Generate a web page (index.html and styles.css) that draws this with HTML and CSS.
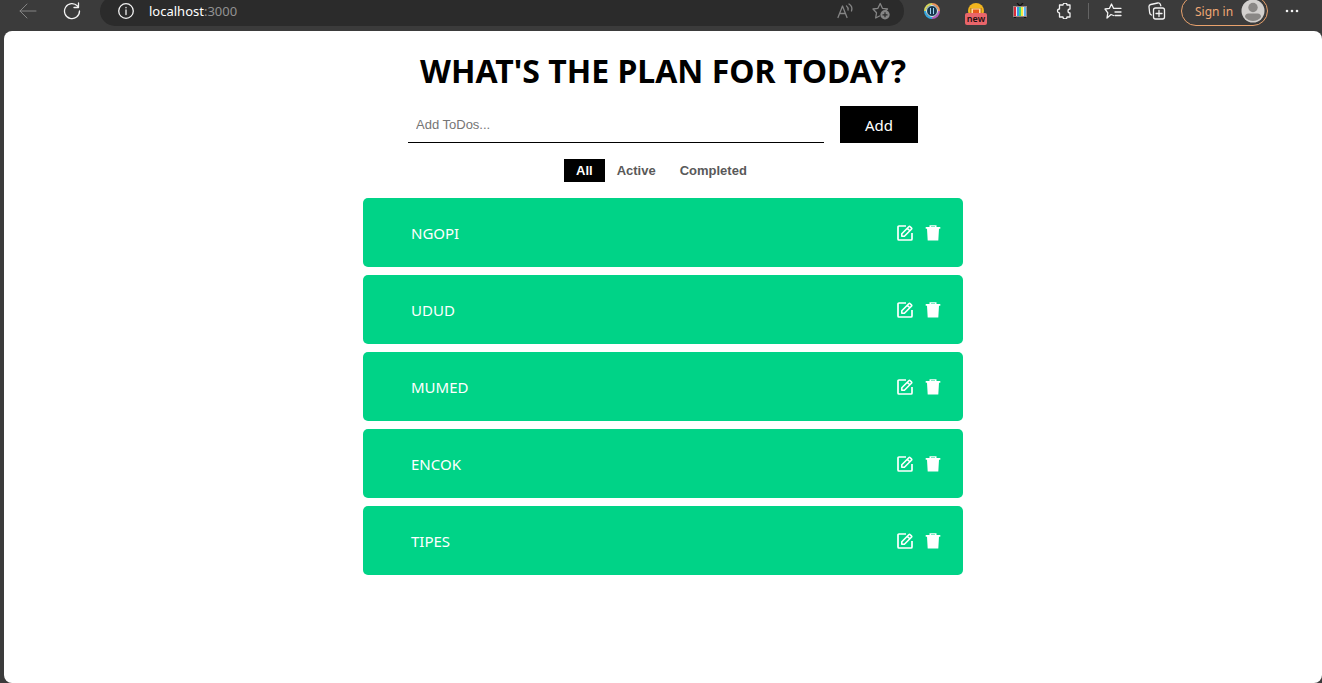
FILE: index.html
```html
<!DOCTYPE html>
<html lang="en">
<head>
<meta charset="utf-8">
<title>Todo list</title>
<link rel="stylesheet" href="styles.css">
</head>
<body>
<svg class="sprite" aria-hidden="true">
  <symbol id="edit" viewBox="0 0 16 16">
    <path d="M9 1H2q-1 0-1 1v12q0 1 1 1h12q1 0 1-1V8" fill="none" stroke="currentColor" stroke-width="1.700"/>
    <path d="M4.800 11.300V8.700L11.800 1.700q.7-.7 1.400 0l1.200 1.200q.7.700 0 1.400L7.400 11.300zM10.300 3.300l2.500 2.500" fill="none" stroke="currentColor" stroke-width="1.600" stroke-linejoin="round"/>
  </symbol>
  <symbol id="trash" viewBox="0 0 16 16">
    <path d="M4.500 2V0.200h7V2h3.800v1.800H14L13.300 15.500H2.700L2 3.800H0.700V2zM6 2h4V1.400H6z" fill="currentColor" fill-rule="evenodd"/>
  </symbol>
</svg>
<header class="toolbar">
  <button class="tool dim" aria-label="Back">
    <svg width="18" height="16" viewBox="0 0 18 16"><path d="M17 8H1M8 1L1 8l7 7" class="line"/></svg>
  </button>
  <button class="tool" aria-label="Reload">
    <svg width="18" height="18" viewBox="0 0 18 18"><path d="M16.500 9A7.500 7.500 0 1 1 14.500 4M15.500 1v4.500H11" class="line bold"/></svg>
  </button>
  <div class="address">
    <button class="mini" aria-label="Site information">
      <svg width="16" height="16" viewBox="0 0 16 16"><circle cx="8" cy="8" r="7.300" class="line bold"/><path d="M8 7v4.500M8 4.500v.3" class="line bold"/></svg>
    </button>
    <span class="url">localhost<span class="port">:3000</span></span>
    <button class="mini soft" aria-label="Read aloud">
      <svg width="17" height="16" viewBox="0 0 17 16"><path d="M1 14.500L5.500 3 10 14.500M2.600 10.500h5.800M9.500 3q2 1.500 1.500 4M12 1q4 2.500 2.500 7" class="line bold"/></svg>
    </button>
    <button class="mini soft" aria-label="Add to favorites">
      <svg width="18" height="18" viewBox="0 0 18 18"><path d="M7.500 14L3.700 16l.8-5.200L1 7l4.900-.7L8.200 1.500l2.200 4.800 5.100.7-1.700 1.500" class="line bold"/><circle cx="13" cy="12.800" r="4.700" fill="currentColor"/><path d="M13 10.300v5M10.500 12.800h5" stroke="#2b2b2b" stroke-width="1.200"/></svg>
    </button>
  </div>
  <button class="tool" aria-label="Color extension">
    <svg width="16" height="16" viewBox="0 0 16 16" fill="none" stroke-width="2">
      <circle cx="8" cy="8" r="6" fill="#17384f"/>
      <path d="M8 1A7 7 0 0 1 15 8" stroke="#ee965c"/><path d="M15 8A7 7 0 0 1 8 15" stroke="#b15cb8"/><path d="M8 15A7 7 0 0 1 1 8" stroke="#33a7df"/><path d="M1 8A7 7 0 0 1 8 1" stroke="#d6d65d"/>
      <circle cx="8" cy="8" r="5.500" stroke="#d7edf2" stroke-width="1"/><path d="M6.500 5v6M9.500 5v6" stroke="#9bd0ee" stroke-width="1"/>
    </svg>
  </button>
  <button class="tool" aria-label="New extension">
    <svg width="16" height="16" viewBox="0 0 16 16"><circle cx="8" cy="8" r="8" fill="#f1b51e"/><path d="M2 5h12v6H2z" fill="#c9871b"/><path d="M3.500 5.500h9v5h-9z" fill="#ffd9a0"/><path d="M5 6.500h6V10H5z" fill="#e65a1c"/></svg>
    <span class="badge">new</span>
  </button>
  <button class="tool" aria-label="TV extension">
    <svg width="16" height="16" viewBox="0 0 16 16"><path d="M5 0l3 3 3-3" fill="none" stroke="#111" stroke-width="1.300"/><path d="M1 3h14v11H1z" fill="#9a8583"/><path d="M2 4h2v9H2z" fill="#d92b3b"/><path d="M4 4h1v9H4z" fill="#efe9e9"/><path d="M5 4h2v9H5z" fill="#3a95e6"/><path d="M7 4h2v9H7z" fill="#39d68a"/><path d="M9 4h2v9H9z" fill="#f5e941"/><path d="M11 4h1v9h-1z" fill="#efe9e9"/><path d="M12 4h2v9h-2z" fill="#5bb5ee"/><path d="M2 14h2v1H2zM12 14h2v1h-2z" fill="#111"/></svg>
  </button>
  <button class="tool" aria-label="Extensions">
    <svg width="16" height="16" viewBox="0 0 16 16"><path d="M3.500 2H7a2 2 0 0 1 4 0h3v4a2 2 0 0 0 0 4v4h-3a2 2 0 0 1-4 0H3.500v-4a2 2 0 0 1 0-4z" class="line bold"/></svg>
  </button>
  <span class="divider"></span>
  <button class="tool" aria-label="Favorites">
    <svg width="18" height="16" viewBox="0 0 18 16"><path d="M9.500 12.500L7 11.500 3 15l.8-5.200L1 6l4.500-.7L7.500 1l2 4.300H17M11 9h6M11 12.500h6" class="line bold"/></svg>
  </button>
  <button class="tool" aria-label="Collections">
    <svg width="18" height="18" viewBox="0 0 18 18"><rect x="5.500" y="6" width="11" height="11" rx="2" class="line bold"/><path d="M11 8.500v6M8 11.500h6M3.500 13Q2 12.500 1.700 11L1 5Q.8 3 2.700 2.500l7-1.500q2-.3 2.600 1.300l.5 1.500" class="line bold"/></svg>
  </button>
  <button class="signin">Sign in
    <svg width="24" height="24" viewBox="0 0 24 24"><circle cx="12" cy="12" r="11.500" fill="#d2d0ce"/><circle cx="12" cy="8.500" r="4.700" fill="#8a8886"/><path d="M4 18q0-3.500 3.500-3.500h9q3.500 0 3.500 3.500a10 10 0 0 1-16 0z" fill="#8a8886"/></svg>
  </button>
  <button class="tool" aria-label="Settings and more">
    <svg width="14" height="4" viewBox="0 0 14 4" fill="currentColor"><circle cx="2" cy="2" r="1.300"/><circle cx="7" cy="2" r="1.300"/><circle cx="12" cy="2" r="1.300"/></svg>
  </button>
</header>
<main class="page">
  <h1 class="title">WHAT'S THE PLAN FOR TODAY?</h1>
  <form class="add-form">
    <input class="add-input" type="text" placeholder="Add ToDos..." aria-label="Add ToDos">
    <button class="add-button" type="button">Add</button>
  </form>
  <div class="filters">
    <button class="filter selected">All</button>
    <button class="filter">Active</button>
    <button class="filter">Completed</button>
  </div>
  <ul class="todos">
    <li class="todo"><span class="name">NGOPI</span><button class="action" aria-label="Edit"><svg><use href="#edit"/></svg></button><button class="action" aria-label="Delete"><svg><use href="#trash"/></svg></button></li>
    <li class="todo"><span class="name">UDUD</span><button class="action" aria-label="Edit"><svg><use href="#edit"/></svg></button><button class="action" aria-label="Delete"><svg><use href="#trash"/></svg></button></li>
    <li class="todo"><span class="name">MUMED</span><button class="action" aria-label="Edit"><svg><use href="#edit"/></svg></button><button class="action" aria-label="Delete"><svg><use href="#trash"/></svg></button></li>
    <li class="todo"><span class="name">ENCOK</span><button class="action" aria-label="Edit"><svg><use href="#edit"/></svg></button><button class="action" aria-label="Delete"><svg><use href="#trash"/></svg></button></li>
    <li class="todo"><span class="name">TIPES</span><button class="action" aria-label="Edit"><svg><use href="#edit"/></svg></button><button class="action" aria-label="Delete"><svg><use href="#trash"/></svg></button></li>
  </ul>
</main>
</body>
</html>
```
FILE: styles.css
```css
* {
  box-sizing: border-box;
}

body {
  margin: 0;
  min-height: 100vh;
  display: flex;
  flex-direction: column;
  background: #3b3b3b;
  font-family: "Segoe UI", "Noto Sans", sans-serif;
}

button {
  border: 0;
  padding: 0;
  background: none;
  color: inherit;
  font-family: inherit;
}

svg {
  display: block;
}

.sprite {
  display: none;
}

.line {
  fill: none;
  stroke: currentColor;
  stroke-linecap: round;
  stroke-linejoin: round;
}

.bold {
  stroke-width: 1.3;
}

.toolbar {
  display: flex;
  align-items: center;
  height: 30px;
  margin: -4px 0 5px;
  padding: 0 8px 0 6px;
  color: #f2f2f2;
}

.tool {
  position: relative;
  flex: none;
  width: 44px;
  height: 30px;
  display: flex;
  align-items: center;
  justify-content: center;
}

.dim {
  color: #858585;
}

.address {
  flex: 1;
  height: 30px;
  margin: 0 6px;
  padding: 0 14px 0 18px;
  display: flex;
  align-items: center;
  gap: 18px;
  border-radius: 15px;
  background: #2b2b2b;
}

.mini {
  flex: none;
}

.soft {
  color: #858585;
}

.url {
  flex: 1;
  margin-left: -3px;
  font-size: 13px;
  line-height: 20px;
  color: #ffffff;
}

.port {
  color: #929292;
}

.badge {
  position: absolute;
  left: 11px;
  top: 17px;
  width: 22px;
  height: 12px;
  border-radius: 2px;
  background: #e8656a;
  color: #1d1010;
  font-size: 9px;
  font-weight: 600;
  line-height: 11px;
  text-align: center;
}

.divider {
  width: 1px;
  height: 16px;
  margin: 0 2px;
  background: #646464;
}

.signin {
  flex: none;
  width: 87px;
  height: 30px;
  margin: 0 2px;
  padding: 0 2px 0 13px;
  display: flex;
  align-items: center;
  justify-content: space-between;
  border: 1px solid #e8a26d;
  border-radius: 15px;
  color: #f0a875;
  font-size: 12px;
}

.page {
  flex: 1;
  display: flex;
  flex-direction: column;
  align-items: center;
  margin-left: 4px;
  padding: 18px 16px 16px;
  border-radius: 8px;
  background: #ffffff;
}

.title {
  margin: 0;
  font-size: 32px;
  line-height: 44px;
  color: #000000;
}

.add-form {
  display: flex;
  gap: 16px;
  width: 100%;
  max-width: 510px;
  margin-top: 13px;
}

.add-input {
  flex: 1;
  min-width: 0;
  padding: 8px;
  border: 0;
  border-bottom: 1px solid #000000;
  outline: none;
  font-family: "Liberation Sans", Arial, sans-serif;
  font-size: 13px;
}

.add-input::placeholder {
  color: #757575;
}

.add-button {
  width: 78px;
  height: 37px;
  background: #000000;
  color: #ffffff;
  font-size: 15px;
}

.filters {
  display: flex;
  width: 100%;
  max-width: 198px;
  margin: 16px 0;
}

.filter {
  padding: 4px 12px;
  color: #595959;
  font-family: "Liberation Sans", Arial, sans-serif;
  font-size: 13px;
  font-weight: 700;
  line-height: 15px;
}

.selected {
  background: #000000;
  color: #ffffff;
}

.todos {
  display: flex;
  flex-direction: column;
  gap: 8px;
  width: 100%;
  max-width: 600px;
  margin: 0;
  padding: 0;
  list-style: none;
}

.todo {
  display: flex;
  align-items: center;
  gap: 12px;
  padding: 24px 22px 23px 48px;
  border-radius: 5px;
  background: #00d387;
  color: #ffffff;
}

.name {
  flex: 1;
  font-size: 15px;
  line-height: 22px;
}

.action svg {
  width: 16px;
  height: 16px;
}
```
